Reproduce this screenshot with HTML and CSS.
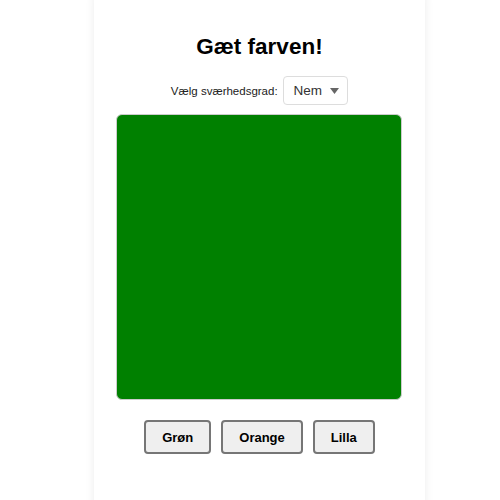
FILE: index.html
```html
<!DOCTYPE html>
<html lang="da">
<head>
    <meta charset="UTF-8">
    <meta name="viewport" content="width=device-width, initial-scale=1.0">
    <title>Gæt farven!</title>
    <link rel="stylesheet" href="styles.css">
</head>
<body>
    <div class="card">
        <h1>Gæt farven!</h1>

        <div class="level">
            <label for="level">Vælg sværhedsgrad:</label>
            <div class="select">
                <span>Nem</span>
                <svg width="9" height="6" viewBox="0 0 9 6"><path d="M0 0h9L4.5 6z" fill="#666"/></svg>
            </div>
        </div>

        <div class="swatch"></div>

        <div class="choices">
            <button>Grøn</button>
            <button>Orange</button>
            <button>Lilla</button>
        </div>
    </div>
</body>
</html>
```

FILE: styles.css
```css
body {
    font-family: "Liberation Sans", Arial, sans-serif;
    margin: 0;
    padding: 0;
    background-color: #fff;
    overflow: hidden;
}

.card {
    width: 331px;
    height: 540px;
    margin: -12px 0 0 94px;
    box-sizing: border-box;
    padding: 48px 22px 0;
    background-color: #fff;
    border-radius: 12px;
    box-shadow: 0 0 10px rgba(0, 0, 0, 0.08);
}

h1 {
    margin: -4px 0 0;
    font-size: 22.5px;
    text-align: center;
    color: #000;
    line-height: 30px;
}

.level {
    display: flex;
    justify-content: center;
    align-items: center;
    gap: 5px;
    margin-top: 14px;
    font-size: 11.5px;
    color: #222;
}

.select {
    display: flex;
    align-items: center;
    gap: 8px;
    height: 29px;
    box-sizing: border-box;
    padding: 0 8px 0 10px;
    border: 1px solid #ddd;
    border-radius: 4px;
    font-size: 13.5px;
    color: #333;
}

.swatch {
    width: 286px;
    height: 286px;
    box-sizing: border-box;
    margin-top: 9px;
    background-color: #008000;
    border: 1px solid #ccc;
    border-radius: 6px;
}

.choices {
    display: flex;
    justify-content: center;
    gap: 10px;
    margin-top: 20px;
}

button {
    height: 34px;
    padding: 0 16px;
    font-family: "Liberation Sans", Arial, sans-serif;
    font-size: 13px;
    font-weight: bold;
    color: #000;
    background-color: #efefef;
    border: 2px solid #767676;
    border-radius: 4px;
}
```
